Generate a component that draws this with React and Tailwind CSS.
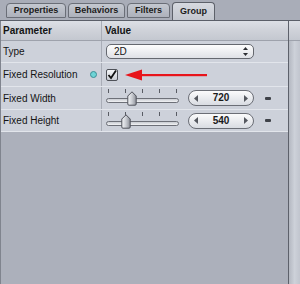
import React from "react";

const tabs = [
  { name: "Properties", w: "w-[60px]" },
  { name: "Behaviors", w: "w-[57px]" },
  { name: "Filters", w: "w-[43px]" },
  { name: "Group", w: "w-[43px]", active: true },
];

const Thumb = () => (
  <svg width="10" height="15" viewBox="0 0 10 15">
    <defs>
      <linearGradient id="tg" x1="0" y1="0" x2="1" y2="0">
        <stop offset="0" stopColor="#f4f5f7" />
        <stop offset="0.5" stopColor="#c9ccd2" />
        <stop offset="1" stopColor="#8d9098" />
      </linearGradient>
    </defs>
    <path d="M5 0.8 L9.2 5 L9.2 13 Q9.2 14.2 8 14.2 L2 14.2 Q0.8 14.2 0.8 13 L0.8 5 Z" fill="url(#tg)" stroke="#4f525a" strokeWidth="1" />
  </svg>
);

const Slider = ({ pos }) => (
  <div className="relative w-[74px] h-[20px] shrink-0">
    {[2, 19, 36, 53, 70].map((x) => (
      <div key={x} className="absolute top-[1px] w-px h-[4px] bg-[#595c64]" style={{ left: x }} />
    ))}
    <div className="absolute left-0 top-[10px] w-[73px] h-[5px] rounded-full border border-[#6d7078] bg-gradient-to-b from-[#c9ccd2] to-[#f2f3f5]" />
    <div className="absolute top-[3px]" style={{ left: pos }}>
      <Thumb />
    </div>
  </div>
);

const Stepper = ({ value }) => (
  <div className="ml-[8px] w-[66px] h-[16px] shrink-0 rounded-full border border-[#6b6e76] bg-gradient-to-b from-[#fbfbfc] to-[#d9dce2] flex items-center justify-between px-[5px]">
    <svg width="4" height="7" viewBox="0 0 4 7"><path d="M4 0 L0 3.5 L4 7 Z" fill="#55585f" /></svg>
    <span className="text-[10px] font-bold text-[#1a1a1a] leading-none">{value}</span>
    <svg width="4" height="7" viewBox="0 0 4 7"><path d="M0 0 L4 3.5 L0 7 Z" fill="#55585f" /></svg>
  </div>
);

const Minus = () => <div className="ml-[11px] w-[6px] h-[3px] rounded-[1px] bg-[#3f4249]" />;

const Row = ({ label, h, children, dot }) => (
  <div className={`flex ${h} border-b border-[#e2e5eb] bg-[#cdd1da]`}>
    <div className="w-[101px] shrink-0 border-r border-[#a9adb7] flex items-center pl-[2px] pr-[4px] text-[10px] text-[#141414]">
      <span>{label}</span>
      {dot && <div className="ml-auto w-[7px] h-[7px] rounded-full bg-[#6ed4d6] border border-[#3c8e94]" />}
    </div>
    <div className="flex-1 flex items-center pl-[4px]">{children}</div>
  </div>
);

export default function App() {
  return (
    <div className="w-[300px] h-[284px] bg-[#acb0bb] flex flex-col overflow-hidden font-['Liberation_Sans',Arial,sans-serif] text-[#141414]">
      {/* tab bar */}
      <div className="h-[20px] shrink-0 flex items-end pl-[6px] gap-[2px] bg-[#a9adb8]">
        {tabs.map((t) =>
          t.active ? (
            <div key={t.name} className={`${t.w} h-[18px] mb-0 rounded-t-[4px] border border-b-0 border-[#5d616a] bg-gradient-to-b from-[#d6d9e0] to-[#c3c7cf] flex items-center justify-center text-[9px] font-bold text-[#1c1c1c]`}>
              {t.name}
            </div>
          ) : (
            <div key={t.name} className={`${t.w} h-[15px] mb-[2px] rounded-t-[4px] rounded-b-[1px] border border-[#6a6e77] bg-gradient-to-b from-[#c4c8d0] to-[#adb1bb] flex items-center justify-center text-[9px] font-bold text-[#1c1c1c]`}>
              {t.name}
            </div>
          )
        )}
      </div>
      <div className="h-px shrink-0 bg-[#5b5f69]" />

      <div className="flex flex-1">
        {/* table */}
        <div className="w-[288px] shrink-0 flex flex-col border-l border-[#80848e]">
          <div className="h-[20px] shrink-0 flex border-b border-[#9ea2ac] bg-gradient-to-b from-[#dde0e6] via-[#cfd2d9] to-[#c4c8d0]">
            <div className="w-[101px] border-r border-[#a9adb7] pl-[2px] flex items-center text-[10px] font-bold">Parameter</div>
            <div className="pl-[3px] flex items-center text-[10px] font-bold">Value</div>
          </div>

          <Row label="Type" h="h-[22px]">
            <div className="w-[148px] h-[15px] rounded-[5px] border border-[#65686f] bg-gradient-to-b from-[#fdfdfd] to-[#dfe1e6] flex items-center justify-between pl-[7px] pr-[5px]">
              <span className="text-[10px] leading-none">2D</span>
              <svg width="5" height="9" viewBox="0 0 5 9">
                <path d="M2.5 0 L5 3 L0 3 Z" fill="#2b2d31" />
                <path d="M2.5 9 L5 6 L0 6 Z" fill="#2b2d31" />
              </svg>
            </div>
          </Row>

          <Row label="Fixed Resolution" h="h-[24px]" dot>
            <div className="w-[12px] h-[12px] rounded-[2px] border border-[#4e5158] bg-gradient-to-b from-[#f5f6f8] to-[#c9ccd3] flex items-center justify-center">
              <svg width="10" height="10" viewBox="0 0 10 10">
                <path d="M1.5 5 L4 8 L9 0.5" fill="none" stroke="#111" strokeWidth="1.8" />
              </svg>
            </div>
            <svg className="ml-[7px]" width="82" height="12" viewBox="0 0 82 12">
              <path d="M0 6 L17 0.5 L17 11.5 Z" fill="#e8141b" />
              <rect x="15" y="5" width="67" height="2.2" fill="#e8141b" />
            </svg>
          </Row>

          <Row label="Fixed Width" h="h-[23px]">
            <Slider pos={21} />
            <Stepper value="720" />
            <Minus />
          </Row>

          <Row label="Fixed Height" h="h-[22px]">
            <Slider pos={15} />
            <Stepper value="540" />
            <Minus />
          </Row>
        </div>

        <div className="w-px shrink-0 bg-[#5d616b]" />

        {/* right strip */}
        <div className="flex-1 flex flex-col">
          <div className="h-[20px] shrink-0 border-b border-[#9ea2ac] bg-gradient-to-b from-[#dde0e6] via-[#cfd2d9] to-[#c4c8d0]" />
          <div className="flex-1 bg-gradient-to-r from-[#b4b8c1] via-[#cdd1d9] to-[#c1c5ce]" />
        </div>
      </div>
    </div>
  );
}
